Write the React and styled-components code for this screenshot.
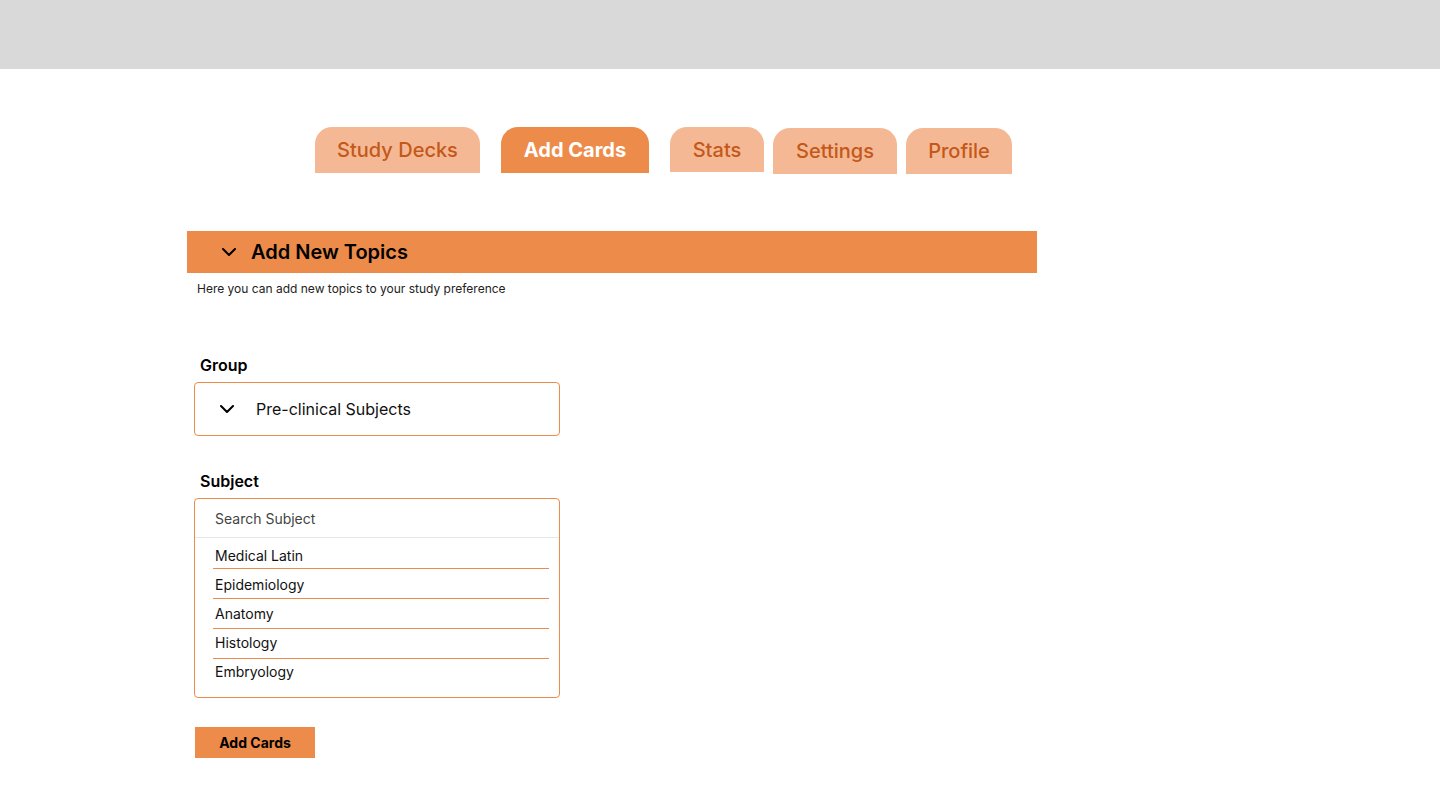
import React from "react";
import styled, { createGlobalStyle } from "styled-components";

const Global = createGlobalStyle`
  html, body { margin: 0; padding: 0; background: #fff; }
  body { font-family: Inter, "Noto Sans", sans-serif; color: #000; }
`;

const TopBar = styled.header`
  height: 69px;
  background: #d9d9d9;
`;

const TabRow = styled.nav`
  display: flex;
  align-items: flex-start;
  padding: 58px 0 0 315px;
  height: 47px;
`;

const Tab = styled.div`
  box-sizing: border-box;
  width: ${(p) => p.$w}px;
  height: ${(p) => p.$h || 46}px;
  margin-top: ${(p) => p.$mt || 0}px;
  margin-right: ${(p) => p.$gap || 0}px;
  border-radius: 17px 17px 0 0;
  background: ${(p) => (p.$active ? "#ed8b4a" : "#f4b994")};
  color: ${(p) => (p.$active ? "#ffffff" : "#c4581a")};
  font-size: 20px;
  font-weight: ${(p) => (p.$active ? 700 : 500)};
  display: flex;
  justify-content: center;
  padding-top: 11px;
  line-height: 24px;
`;

const Main = styled.main`
  margin-left: 187px;
  width: 850px;
  padding-top: 57px;
`;

const SectionHeader = styled.div`
  height: 42px;
  background: #ed8b4a;
  display: flex;
  align-items: center;
  padding-left: 35px;
  gap: 15px;
  font-size: 20px;
  font-weight: 600;
`;

const Description = styled.p`
  margin: 9px 0 0 10px;
  font-size: 12px;
  line-height: 14px;
  color: #222;
`;

const Form = styled.div`
  padding: 60px 0 0 7px;
  width: 366px;
`;

const Label = styled.div`
  font-size: 16px;
  font-weight: 600;
  line-height: 19px;
  padding-left: 6px;
  margin-bottom: 7px;
`;

const Select = styled.div`
  box-sizing: border-box;
  height: 54px;
  border: 1px solid #ed8b4a;
  border-radius: 4px;
  display: flex;
  align-items: center;
  padding-left: 25px;
  gap: 22px;
  font-size: 16px;
  color: #111;
  margin-bottom: 36px;
`;

const ListBox = styled.div`
  box-sizing: border-box;
  height: 200px;
  border: 1px solid #ed8b4a;
  border-radius: 4px;
`;

const Search = styled.div`
  height: 39px;
  box-sizing: border-box;
  border-bottom: 1px solid #e6e6e6;
  padding: 11px 0 0 20px;
  font-size: 14px;
  line-height: 17px;
  color: #444;
`;

const List = styled.ul`
  list-style: none;
  margin: 0;
  padding: 1px 10px 0 18px;
`;

const Item = styled.li`
  height: 30px;
  box-sizing: border-box;
  padding: ${(p) => 7.5 - p.$i}px 0 0 2px;
  font-size: 14px;
  line-height: 17px;
  color: #111;
  border-bottom: ${(p) => (p.$last ? "none" : "1px solid #ed8b4a")};
`;

const Button = styled.button`
  margin: 29px 0 0 1px;
  width: 120px;
  height: 31px;
  border: none;
  background: #ed8b4a;
  font-family: Inter, "Noto Sans", sans-serif;
  font-weight: 700;
  font-size: 14px;
  color: #000;
  padding: 0;
`;

const Chevron = () => (
  <svg width="14" height="8" viewBox="0 0 14 8" fill="none">
    <path d="M1 1l6 6 6-6" stroke="#000" strokeWidth="2" strokeLinecap="round" strokeLinejoin="round" />
  </svg>
);

const subjects = ["Medical Latin", "Epidemiology", "Anatomy", "Histology", "Embryology"];

export default function App() {
  return (
    <>
      <Global />
      <TopBar />
      <TabRow>
        <Tab $w={165} $gap={21}>Study Decks</Tab>
        <Tab $w={148} $gap={21} $active>Add Cards</Tab>
        <Tab $w={94} $h={45} $gap={9}>Stats</Tab>
        <Tab $w={124} $mt={1} $gap={9}>Settings</Tab>
        <Tab $w={106} $mt={1}>Profile</Tab>
      </TabRow>
      <Main>
        <SectionHeader>
          <Chevron />
          <span>Add New Topics</span>
        </SectionHeader>
        <Description>Here you can add new topics to your study preference</Description>
        <Form>
          <Label>Group</Label>
          <Select>
            <Chevron />
            <span>Pre-clinical Subjects</span>
          </Select>
          <Label>Subject</Label>
          <ListBox>
            <Search>Search Subject</Search>
            <List>
              {subjects.map((s, i) => (
                <Item key={s} $i={i} $last={i === subjects.length - 1}>{s}</Item>
              ))}
            </List>
          </ListBox>
          <Button>Add Cards</Button>
        </Form>
      </Main>
    </>
  );
}
